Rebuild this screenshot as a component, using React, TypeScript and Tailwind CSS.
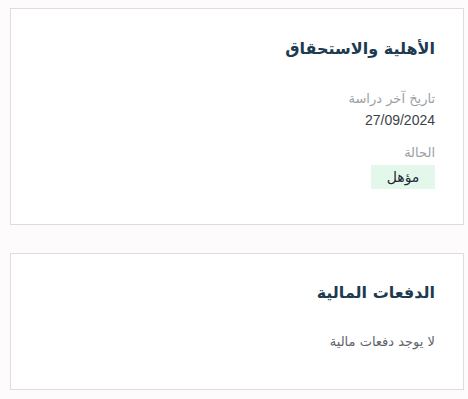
export default function App() {
  return (
    <div
      className="h-screen overflow-hidden bg-[#fdfbfc] pl-[10px] pt-[8px]"
      style={{ fontFamily: '"DejaVu Sans", "Noto Sans", sans-serif' }}
    >
      <div dir="rtl" className="flex flex-col gap-[28px] w-[454px]">
        {/* Eligibility */}
        <section className="bg-white border border-[#dedcdd] h-[217px] px-[28px] pt-[27px]">
          <h2 className="text-[16px] font-bold text-[#1d3a4f] leading-[26px]">الأهلية والاستحقاق</h2>
          <div className="mt-[26px] flex flex-col items-start">
            <span className="text-[13px] text-[#9aa0a6] leading-[22px]">تاريخ آخر دراسة</span>
            <span className="text-[14px] text-[#3b4148] leading-[20px]" style={{ fontFamily: '"Liberation Sans", sans-serif' }}>
              27/09/2024
            </span>
            <span className="mt-[12px] text-[13px] text-[#9aa0a6] leading-[22px]">الحالة</span>
            <span className="mt-[1px] bg-[#e3f8ea] text-[#1f2937] text-[14px] leading-[24px] w-[64px] text-center">مؤهل</span>
          </div>
        </section>

        {/* Payments */}
        <section className="bg-white border border-[#dedcdd] h-[137px] px-[28px] pt-[26px]">
          <h2 className="text-[16px] font-bold text-[#1d3a4f] leading-[26px]">الدفعات المالية</h2>
          <p className="mt-[25px] text-[13px] text-[#5f656b] leading-[22px]">لا يوجد دفعات مالية</p>
        </section>
      </div>
    </div>
  );
}
